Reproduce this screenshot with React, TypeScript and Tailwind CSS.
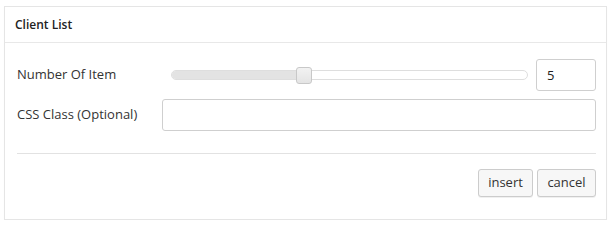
import React from "react";

const font = { fontFamily: '"Open Sans", "Liberation Sans", sans-serif' };

function Slider({ value, max }: { value: number; max: number }) {
  const pct = (value / max) * 100;
  return (
    <div className="relative h-[10px] w-full rounded-full border border-[#dedede] bg-white">
      <div
        className="absolute left-0 top-0 h-full rounded-l-full bg-[#e3e3e3]"
        style={{ width: `${pct}%` }}
      />
      <div
        className="absolute top-[-4px] h-[17px] w-[16px] -translate-x-1/2 rounded-[3px] border border-[#c8c8c8] bg-gradient-to-b from-[#f2f2f2] to-[#e4e4e4]"
        style={{ left: `${pct}%` }}
      />
    </div>
  );
}

export default function App() {
  return (
    <div className="bg-white pl-[4px] pt-[6px] text-[#333]" style={font}>
      <div className="w-[603px] border border-[#e5e5e5] bg-white shadow-[0_1px_1px_rgba(0,0,0,0.04)]">
        <div className="flex h-[36px] items-center border-b border-[#e8e8e8] pl-[10px]">
          <span className="text-[12px] font-semibold text-[#222]">Client List</span>
        </div>

        <div className="pl-[12px] pr-[10px] pt-[16px] pb-[22px]">
          <div className="flex h-[32px] items-center">
            <label className="w-[145px] text-[13px]">Number Of Item</label>
            <div className="flex flex-1 items-center pl-[9px] pr-[8px]">
              <Slider value={5} max={13.4} />
            </div>
            <input
              readOnly
              value="5"
              className="h-[32px] w-[60px] rounded-[3px] border border-[#cfcfcf] px-[10px] text-[13px] text-[#222] outline-none"
              style={font}
            />
          </div>

          <div className="mt-[8px] flex h-[32px] items-center">
            <label className="w-[145px] text-[13px]">CSS Class (Optional)</label>
            <input
              readOnly
              className="h-[32px] flex-1 rounded-[3px] border border-[#cfcfcf] px-[10px] text-[13px] outline-none"
              style={font}
            />
          </div>

          <div className="mt-[22px] border-t border-[#e2e2e2]" />

          <div className="mt-[15px] flex justify-end gap-[4px]">
            <button className="h-[28px] w-[55px] rounded-[3px] border border-[#cccccc] bg-[#f7f7f7] text-[13px] text-[#333] shadow-[0_1px_0_rgba(0,0,0,0.06)]">
              insert
            </button>
            <button className="h-[28px] w-[59px] rounded-[3px] border border-[#cccccc] bg-[#f7f7f7] text-[13px] text-[#333] shadow-[0_1px_0_rgba(0,0,0,0.06)]">
              cancel
            </button>
          </div>
        </div>
      </div>
    </div>
  );
}
